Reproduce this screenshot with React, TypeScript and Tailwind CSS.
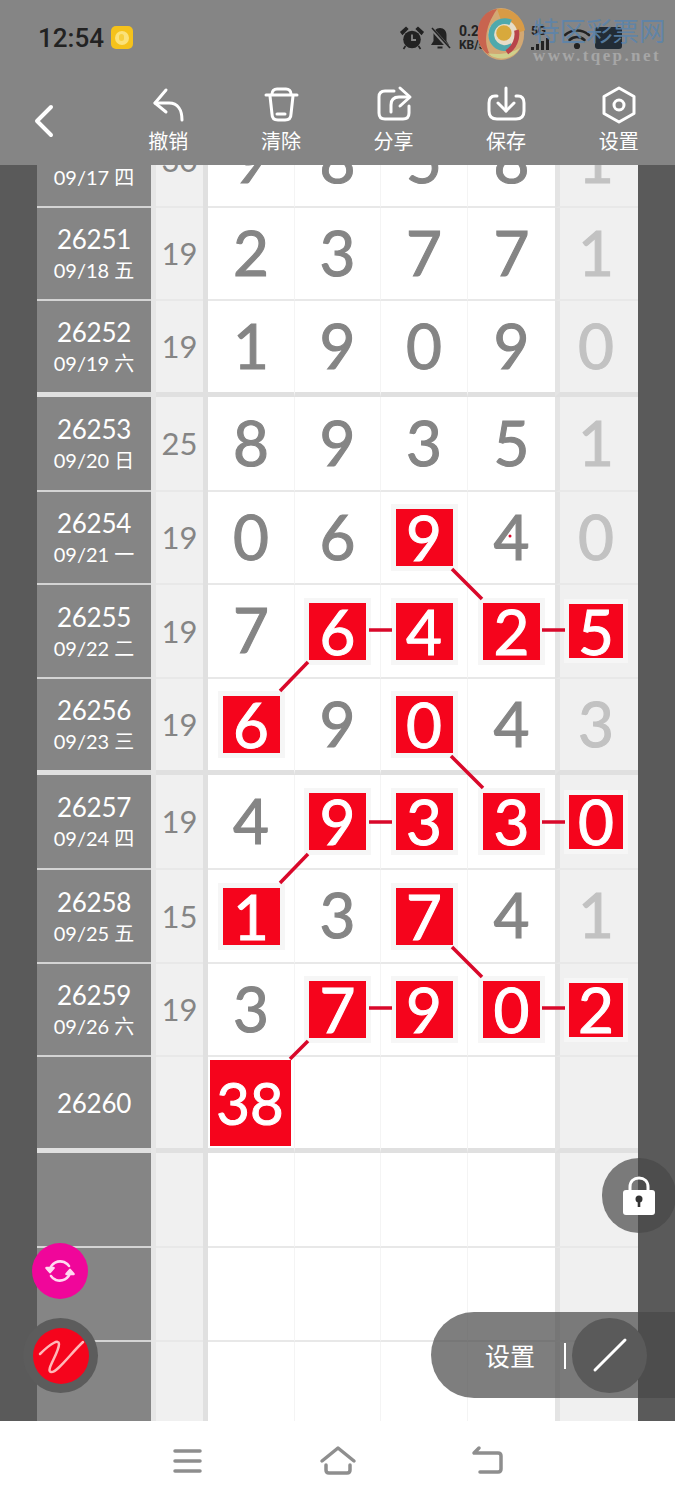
type Row = {
  h: number;
  id: string;
  date: string;
  sum: string;
  nums: string[];
  hits: number[];
  line: "thin" | "thick" | "none";
};

const rows: Row[] = [
  { h: 93, id: "26250", date: "09/17 四", sum: "30", nums: ["9", "8", "5", "8", "1"], hits: [], line: "thin" },
  { h: 93, id: "26251", date: "09/18 五", sum: "19", nums: ["2", "3", "7", "7", "1"], hits: [], line: "thin" },
  { h: 96, id: "26252", date: "09/19 六", sum: "19", nums: ["1", "9", "0", "9", "0"], hits: [], line: "thick" },
  { h: 95, id: "26253", date: "09/20 日", sum: "25", nums: ["8", "9", "3", "5", "1"], hits: [], line: "thin" },
  { h: 93, id: "26254", date: "09/21 一", sum: "19", nums: ["0", "6", "9", "4", "0"], hits: [2], line: "thin" },
  { h: 94, id: "26255", date: "09/22 二", sum: "19", nums: ["7", "6", "4", "2", "5"], hits: [1, 2, 3, 4], line: "thin" },
  { h: 96, id: "26256", date: "09/23 三", sum: "19", nums: ["6", "9", "0", "4", "3"], hits: [0, 2], line: "thick" },
  { h: 95, id: "26257", date: "09/24 四", sum: "19", nums: ["4", "9", "3", "3", "0"], hits: [1, 2, 3, 4], line: "thin" },
  { h: 94, id: "26258", date: "09/25 五", sum: "15", nums: ["1", "3", "7", "4", "1"], hits: [0, 2], line: "thin" },
  { h: 93, id: "26259", date: "09/26 六", sum: "19", nums: ["3", "7", "9", "0", "2"], hits: [1, 2, 3, 4], line: "thin" },
  { h: 96, id: "26260", date: "", sum: "", nums: ["38", "", "", "", ""], hits: [0], line: "thick" },
  { h: 95, id: "", date: "", sum: "", nums: ["", "", "", "", ""], hits: [], line: "thin" },
  { h: 94, id: "", date: "", sum: "", nums: ["", "", "", "", ""], hits: [], line: "thin" },
  { h: 79, id: "", date: "", sum: "", nums: ["", "", "", "", ""], hits: [], line: "none" },
];

const cellWidths = ["w-[87px]", "w-[86px]", "w-[87px]", "w-[87px]"];

function lineClass(line: Row["line"]) {
  if (line === "thick") return "border-b-[5px] border-[#e0e0e0]";
  if (line === "thin") return "border-b-2 border-[#e8e8e8]";
  return "";
}

function Digit({ value, hit, big, side }: { value: string; hit: boolean; big: boolean; side: boolean }) {
  if (!value) return null;
  if (big) {
    return (
      <div className="flex h-[86px] w-[81px] -translate-x-px items-center justify-center bg-[#f5041c] text-[58px] text-white [-webkit-text-stroke:1px_#fff]">
        {value}
      </div>
    );
  }
  if (hit) {
    return (
      <div
        className={
          side
            ? "flex h-[54px] w-[54px] items-center justify-center bg-[#f5041c] pb-[1px] text-[62px] text-white shadow-[0_0_0_5px_#f6f6f6] [-webkit-text-stroke:1px_#fff]"
            : "flex h-[57px] w-[57px] items-center justify-center bg-[#f5041c] pb-[1px] text-[62px] text-white shadow-[0_0_0_5px_#f6f6f6] [-webkit-text-stroke:1px_#fff]"
        }
      >
        {value}
      </div>
    );
  }
  return (
    <div
      className={
        side
          ? "pb-[4px] text-[62px] text-[#c2c2c2] [-webkit-text-stroke:1.1px_#c2c2c2]"
          : "pb-[4px] text-[62px] text-[#858585] [-webkit-text-stroke:1.1px_#858585]"
      }
    >
      {value}
    </div>
  );
}

function TableRow({ row, first }: { row: Row; first: boolean }) {
  const line = lineClass(row.line);
  const idLine =
    row.line === "thick"
      ? "border-b-[5px] border-[#e0e0e0]"
      : row.line === "thin"
        ? "border-b-2 border-[#d4d4d4]"
        : "";
  return (
    <div className={first ? "-mt-[50px] flex shrink-0" : "flex shrink-0"} style={{ height: row.h }}>
      <div className={`flex w-[114px] flex-col items-center justify-center bg-[#858585] pt-[2px] text-white ${idLine}`}>
        {row.id && <div className="text-[26px] leading-[31px] tracking-[-0.3px]">{row.id}</div>}
        {row.date && <div className="text-[20px] leading-[30px]">{row.date}</div>}
      </div>
      <div className="w-[5px] bg-[#e6e6e6]" />
      <div className={`flex w-[47px] items-center justify-center bg-[#f0f0f0] text-[31px] text-[#858585] ${line}`}>
        {row.sum}
      </div>
      <div className="w-[5px] bg-[#e0e0e0]" />
      {[0, 1, 2, 3].map((i) => (
        <div
          key={i}
          className={`flex items-center justify-center bg-white leading-none ${cellWidths[i]} ${line} ${i < 3 ? "border-r border-r-[#f4f4f4]" : ""}`}
        >
          <Digit value={row.nums[i]} hit={row.hits.includes(i)} big={row.nums[i] === "38"} side={false} />
        </div>
      ))}
      <div className={`flex w-[83px] items-center justify-center border-l-[5px] border-l-[#e4e4e4] bg-[#f0f0f0] pr-[6px] leading-none ${line}`}>
        <Digit value={row.nums[4]} hit={row.hits.includes(4)} big={false} side />
      </div>
    </div>
  );
}

function ToolIcon({ box, children }: { box: string; children: React.ReactNode }) {
  return (
    <svg viewBox={box} className="h-[40px] w-[40px]" fill="none" stroke="#fff" strokeWidth="3" strokeLinecap="round" strokeLinejoin="round">
      {children}
    </svg>
  );
}

const tools = [
  {
    label: "撤销",
    icon: (
      <ToolIcon box="148 85 40 40">
        <path d="M166 90 L155 103 L166 112" />
        <path d="M155 103 H169 C178 103 182 110 182 120" />
      </ToolIcon>
    ),
  },
  {
    label: "清除",
    icon: (
      <ToolIcon box="261 85 40 40">
        <path d="M266 95 H297" />
        <path d="M272 94 C272 91 274 89 277 89 H286 C289 89 291 91 291 94" />
        <path d="M270 96 L272 114 C272 118 274 120 278 120 H285 C289 120 291 118 291 114 L293 96" />
        <path d="M277 114 H285" />
      </ToolIcon>
    ),
  },
  {
    label: "分享",
    icon: (
      <ToolIcon box="373 85 40 40">
        <path d="M394 91 H385 Q379 91 379 97 V113 Q379 119 385 119 H403 Q409 119 409 113 V106" />
        <path d="M400 88 L410 97 L400 106" />
        <path d="M409 97 H399 Q391 97 391 105 V112" />
      </ToolIcon>
    ),
  },
  {
    label: "保存",
    icon: (
      <ToolIcon box="486 85 40 40">
        <path d="M497 96 H495 Q489 96 489 103 V111 Q489 119 497 119 H516 Q524 119 524 111 V103 Q524 96 518 96 H516" />
        <path d="M506 88 V111" />
        <path d="M498 103 L506 111 L514 103" />
      </ToolIcon>
    ),
  },
  {
    label: "设置",
    icon: (
      <ToolIcon box="599 85 40 40">
        <path d="M619 88 L634 96.5 V113.5 L619 122 L604 113.5 V96.5 Z" />
        <circle cx="619" cy="105" r="5" />
      </ToolIcon>
    ),
  },
];

function StatusBar() {
  return (
    <div className="flex h-[74px] items-center pl-[38px] pt-[1px]">
      <div className="text-[26px] font-medium leading-none text-[#222] [font-family:Roboto,sans-serif]">12:54</div>
      <div className="ml-[7px] flex h-[23px] w-[22px] items-center justify-center rounded-[5px] bg-[#f5c21b]">
        <div className="flex h-[14px] w-[14px] items-center justify-center rounded-full bg-[#fbe27a]">
          <div className="h-[7px] w-[5px] rounded-full bg-[#f7cf3f]" />
        </div>
      </div>
      <svg viewBox="0 0 24 24" className="ml-[267px] h-[24px] w-[24px]" fill="#222">
        <circle cx="12" cy="13.5" r="8.8" />
        <path d="M1 6 L6 1.5 L7.5 3 L2.5 8 Z M23 6 L18 1.5 L16.5 3 L21.5 8 Z M5.5 20 L3.5 23 M18.5 20 L20.5 23" stroke="#222" strokeWidth="1.6" />
        <path d="M12 8.5 V14 H16" stroke="#858585" strokeWidth="1.8" fill="none" />
      </svg>
      <svg viewBox="0 0 24 24" className="ml-[4px] h-[24px] w-[24px]" fill="#222">
        <path d="M12 2 C8 2 5.5 5 5.5 9 V15 L3 19 H21 L18.500 15 V9 C18.500 5 16 2 12 2 Z" />
        <path d="M9.500 20.500 H14.500 V22.500 H9.500 Z" />
        <path d="M3 2 L21 22" stroke="#858585" strokeWidth="3.500" />
        <path d="M4 2 L22 22" stroke="#222" strokeWidth="1.500" />
      </svg>
      <div className="ml-[7px] w-[34px] text-[14px] font-bold leading-[14px] text-[#222] [font-family:Roboto,sans-serif]">
        <div>0.21</div>
        <div className="text-[12px]">KB/s</div>
      </div>
      <div className="ml-[38px] mt-[1px] flex w-[26px] flex-col">
        <div className="text-[12px] font-bold leading-[11px] text-[#222] [font-family:Roboto,sans-serif]">5G</div>
        <div className="mt-[1px] flex h-[12px] items-end gap-[2px]">
          <div className="h-[3px] w-[3px] bg-[#222]" />
          <div className="h-[6px] w-[3px] bg-[#222]" />
          <div className="h-[9px] w-[3px] bg-[#222]" />
          <div className="h-[12px] w-[3px] bg-[#222]" />
        </div>
      </div>
      <svg viewBox="0 0 28 22" className="ml-[6px] mt-[3px] h-[22px] w-[28px]" fill="none" stroke="#222" strokeWidth="2.600" strokeLinecap="round">
        <path d="M2 7 C9 1 19 1 26 7" />
        <path d="M6.500 12 C11 8 17 8 21.500 12" />
        <circle cx="14" cy="18" r="1.800" fill="#222" />
      </svg>
      <div className="ml-[4px] mt-[1px] h-[22px] w-[27px] rounded-[3px] bg-[#222c36]" />
    </div>
  );
}

function Watermark() {
  return (
    <div className="pointer-events-none absolute left-[474px] top-[7px] flex h-[58px] w-[196px] items-start">
      <svg viewBox="0 0 56 56" className="h-[54px] w-[54px] shrink-0" fill="none">
        <ellipse cx="28" cy="28" rx="24" ry="27" fill="#d3a873" />
        <path d="M24 2 A26 26 0 0 1 53 24 L42 28 A14 14 0 0 0 28 14 Z" fill="#d89b46" />
        <path d="M24 2 C8 4 1 20 5 36 C8 44 12 48 18 51 C10 40 10 22 24 2 Z" fill="#c8644f" />
        <path d="M14 48 C22 56 40 56 48 42 C40 48 26 50 14 48 Z" fill="#cfd08c" />
        <circle cx="30" cy="28" r="15" fill="#e6dcc8" />
        <path d="M38 16 A14 14 0 1 0 40 40" stroke="#4fa9ac" strokeWidth="6" />
        <circle cx="31" cy="27" r="8" fill="#d8a93c" />
        <path d="M44 24 C46 32 42 42 34 47" stroke="#b8444a" strokeWidth="5" />
      </svg>
      <div className="ml-[5px] flex flex-col">
        <div className="mt-[7px] whitespace-nowrap text-[26.5px] leading-[32px] text-[#5c84ab]/90 [font-family:'Noto_Sans_CJK_SC',sans-serif]">特区彩票网</div>
        <div className="whitespace-nowrap text-[17px] font-bold leading-[20px] tracking-[2.4px] text-[#a6a6a6] [font-family:'Liberation_Serif',serif]">www.tqep.net</div>
      </div>
    </div>
  );
}

export default function App() {
  return (
    <div className="relative flex h-[1500px] w-[675px] flex-col overflow-hidden bg-white [font-family:Lato,'Noto_Sans_CJK_SC',sans-serif]">
      <header className="relative z-10 h-[165px] shrink-0 bg-[#858585]">
        <StatusBar />
        <div className="mt-[11px] flex">
          <div className="w-[112px]">
            <svg viewBox="30 95 30 50" className="ml-[30px] mt-[10px] h-[50px] w-[30px]" fill="none" stroke="#fff" strokeWidth="4" strokeLinecap="round" strokeLinejoin="round">
              <path d="M51 107 L37 121 L51 135" />
            </svg>
          </div>
          {tools.map((t) => (
            <div key={t.label} className="flex w-[112.6px] flex-col items-center">
              {t.icon}
              <div className="mt-[2px] text-[20px] leading-[28px] text-white [font-family:'Noto_Sans_CJK_SC',sans-serif]">{t.label}</div>
            </div>
          ))}
        </div>
        <Watermark />
      </header>

      <main className="flex h-[1256px] shrink-0 overflow-hidden">
        <div className="w-[37px] shrink-0 bg-[#5a5a5a]" />
        <div className="flex w-[601px] shrink-0 flex-col">
          {rows.map((r, i) => (
            <TableRow key={i} row={r} first={i === 0} />
          ))}
        </div>
        <div className="w-[37px] shrink-0 bg-[#5a5a5a]" />
      </main>

      <nav className="flex h-[79px] shrink-0 items-start justify-center bg-white">
        <svg viewBox="150 1430 75 60" className="mx-[37.5px] mt-[9px] h-[60px] w-[75px]" fill="none" stroke="#8e8e8e" strokeWidth="3.500" strokeLinecap="round" strokeLinejoin="round">
          <path d="M175 1451 H200 M175 1461 H200 M175 1471 H200" />
        </svg>
        <svg viewBox="300 1430 75 60" className="mx-[37.5px] mt-[9px] h-[60px] w-[75px]" fill="none" stroke="#8e8e8e" strokeWidth="3.500" strokeLinecap="round" strokeLinejoin="round">
          <path d="M322 1461 L338 1448 L354 1461" />
          <path d="M326 1465 V1470 Q326 1473 329 1473 H347 Q350 1473 350 1470 V1465" />
        </svg>
        <svg viewBox="450 1430 75 60" className="mx-[37.5px] mt-[9px] h-[60px] w-[75px]" fill="none" stroke="#8e8e8e" strokeWidth="3.500" strokeLinecap="round" strokeLinejoin="round">
          <path d="M479 1448 L474 1453 H498 Q501 1453 501 1456 V1469 Q501 1472 498 1472 H480" />
        </svg>
      </nav>

      {/* Lines drawn over the grid that join the highlighted numbers */}
      <svg viewBox="0 0 675 1500" className="pointer-events-none absolute left-0 top-0 h-[1500px] w-[675px]" fill="none" stroke="#d9082a" strokeWidth="3.500">
        <path d="M452 569 L482 599" />
        <path d="M369 630 H392 M542 630 H565" />
        <path d="M308 662 L280 691" />
        <path d="M451 756 L483 788" />
        <path d="M369 822 H392 M542 822 H565" />
        <path d="M308 854 L280 883" />
        <path d="M452 947 L482 977" />
        <path d="M369 1008 H392 M542 1008 H565" />
        <path d="M308 1041 L290 1059" />
        <circle cx="510" cy="536" r="1.500" fill="#d9082a" stroke="none" />
      </svg>

      {/* Floating buttons */}
      <div className="absolute left-[32px] top-[1243px] flex h-[56px] w-[56px] items-center justify-center rounded-full bg-[#f0069a]">
        <svg viewBox="0 0 32 32" className="h-[32px] w-[32px]" fill="none" stroke="#ffd9f1" strokeWidth="2.600" strokeLinecap="round" strokeLinejoin="round">
          <path d="M6 15 C7 8 14 5 20 7 C22 8 24 9 25 11" />
          <path d="M26 17 C25 24 18 27 12 25 C10 24 8 23 7 21" />
          <path d="M2.500 13 L6 17 L9.500 13 Z" fill="#ffd9f1" />
          <path d="M22.500 19 L26 15 L29.500 19 Z" fill="#ffd9f1" />
        </svg>
      </div>
      <div className="absolute left-[23px] top-[1318px] flex h-[75px] w-[75px] items-center justify-center rounded-full bg-[#5c5c5c]">
        <div className="h-[56px] w-[56px] rounded-full bg-[#f5041c]">
          <svg viewBox="32 1327 56 56" className="h-[56px] w-[56px]" fill="none" stroke="#ffb8b8" strokeWidth="2.500" strokeLinecap="round" strokeLinejoin="round">
            <path d="M39 1353 C50 1342 58 1338 58 1343 C58 1352 44 1370 50 1371 C56 1372 70 1352 82 1341" />
          </svg>
        </div>
      </div>
      <div className="absolute left-[602px] top-[1158px] flex h-[75px] w-[74px] items-center justify-center rounded-full bg-[#474747]/70">
        <svg viewBox="0 0 36 42" className="h-[42px] w-[36px]">
          <path d="M9 19 V12 C9 6 13 3 18 3 C23 3 27 6 27 12 V19" fill="none" stroke="#fff" strokeWidth="3" />
          <rect x="2" y="15" width="32" height="25" rx="3" fill="#fff" />
          <circle cx="18" cy="24" r="3.500" fill="#333" />
          <rect x="16.700" y="25" width="2.600" height="7" fill="#333" />
        </svg>
      </div>
      <div className="absolute left-[431px] top-[1312px] flex h-[86px] w-[244px] items-center rounded-l-[43px] bg-[#474747]/70">
        <div className="ml-[54px] mt-[2px] w-[50px] whitespace-nowrap text-[25px] text-white [font-family:'Noto_Sans_CJK_SC',sans-serif]">设置</div>
        <div className="ml-[29px] mt-[2px] h-[26px] w-[2px] bg-white" />
        <div className="ml-[6px] flex h-[75px] w-[75px] items-center justify-center rounded-full bg-[#5a5a5a]">
          <svg viewBox="0 0 36 36" className="h-[36px] w-[36px]" fill="none" stroke="#fff" strokeWidth="3" strokeLinecap="round">
            <path d="M3 33 L33 3" />
          </svg>
        </div>
      </div>
    </div>
  );
}
